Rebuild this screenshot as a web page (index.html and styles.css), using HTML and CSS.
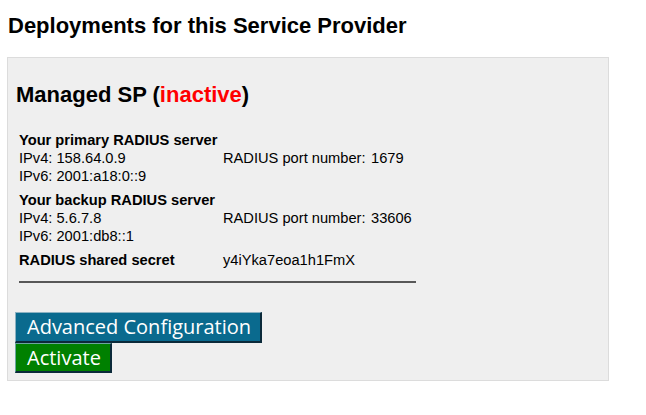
FILE: index.html
```html
<!DOCTYPE html>
<html>
<head>
<meta charset="utf-8">
<link rel="stylesheet" href="styles.css">
</head>
<body>
<div class="page">
  <h2 class="title">Deployments for this Service Provider</h2>
  <div class="box">
    <h3 class="sp">Managed SP (<span class="inactive">inactive</span>)</h3>
    <div class="info">
      <div class="section">
        <div class="row"><span class="head">Your primary RADIUS server</span></div>
        <div class="row"><span class="c1">IPv4: 158.64.0.9</span><span class="c2">RADIUS port number:</span><span>1679</span></div>
        <div class="row"><span class="c1">IPv6: 2001:a18:0::9</span></div>
      </div>
      <div class="section">
        <div class="row"><span class="head">Your backup RADIUS server</span></div>
        <div class="row"><span class="c1">IPv4: 5.6.7.8</span><span class="c2">RADIUS port number:</span><span>33606</span></div>
        <div class="row"><span class="c1">IPv6: 2001:db8::1</span></div>
      </div>
      <div class="section">
        <div class="row"><span class="c1 head">RADIUS shared secret</span><span>y4iYka7eoa1h1FmX</span></div>
      </div>
      <div class="rule"></div>
    </div>
    <div class="buttons">
      <button class="btn btn-blue">Advanced Configuration</button>
      <button class="btn btn-green">Activate</button>
    </div>
  </div>
</div>
</body>
</html>
```
FILE: styles.css
```css
html, body {
  margin: 0;
  padding: 0;
  background: #fff;
}
.page {
  padding: 0 37px 0 7px;
  font-family: "Liberation Sans", Arial, sans-serif;
  color: #000;
}
.title {
  margin: 13px 0 0 1px;
  font-size: 22px;
  line-height: 26px;
  font-weight: bold;
  height: 44px;
}
.box {
  width: 600px;
  border: 1px solid #dcdcdc;
  background: #efefef;
  padding: 0 0 7px 0;
}
.sp {
  margin: 24px 0 0 8px;
  font-size: 22px;
  line-height: 26px;
  font-weight: bold;
}
.inactive {
  color: #ff0000;
}
.info {
  margin: 0 0 0 11px;
  padding-top: 23px;
  font-size: 14.667px;
  line-height: 18px;
}
.section + .section {
  margin-top: 6px;
}
.row {
  display: flex;
  height: 18px;
}
.c1 {
  width: 204px;
  flex: none;
}
.c2 {
  width: 148px;
  flex: none;
}
.head {
  font-weight: bold;
}
.rule {
  margin-top: 12px;
  width: 397px;
  height: 2px;
  background: #585858;
}
.buttons {
  display: flex;
  flex-direction: column;
  align-items: flex-start;
  margin: 29px 0 0 7px;
}
.btn {
  font-family: "Open Sans", "Noto Sans", sans-serif;
  font-size: 20px;
  line-height: 27px;
  color: #fff;
  margin: 0;
  padding: 0 9px 0 11px;
  border-style: solid;
  border-width: 1px 2px 2px 1px;
  cursor: pointer;
}
.btn-blue {
  line-height: 28px;
  background: #0a6a8e;
  border-color: #8cb2c2 #0b2a3a #0b2a3a #8cb2c2;
}
.btn-green {
  background: #008000;
  border-color: #6aa6a0 #0b2a3a #0b2a3a #6aa6a0;
}
```
